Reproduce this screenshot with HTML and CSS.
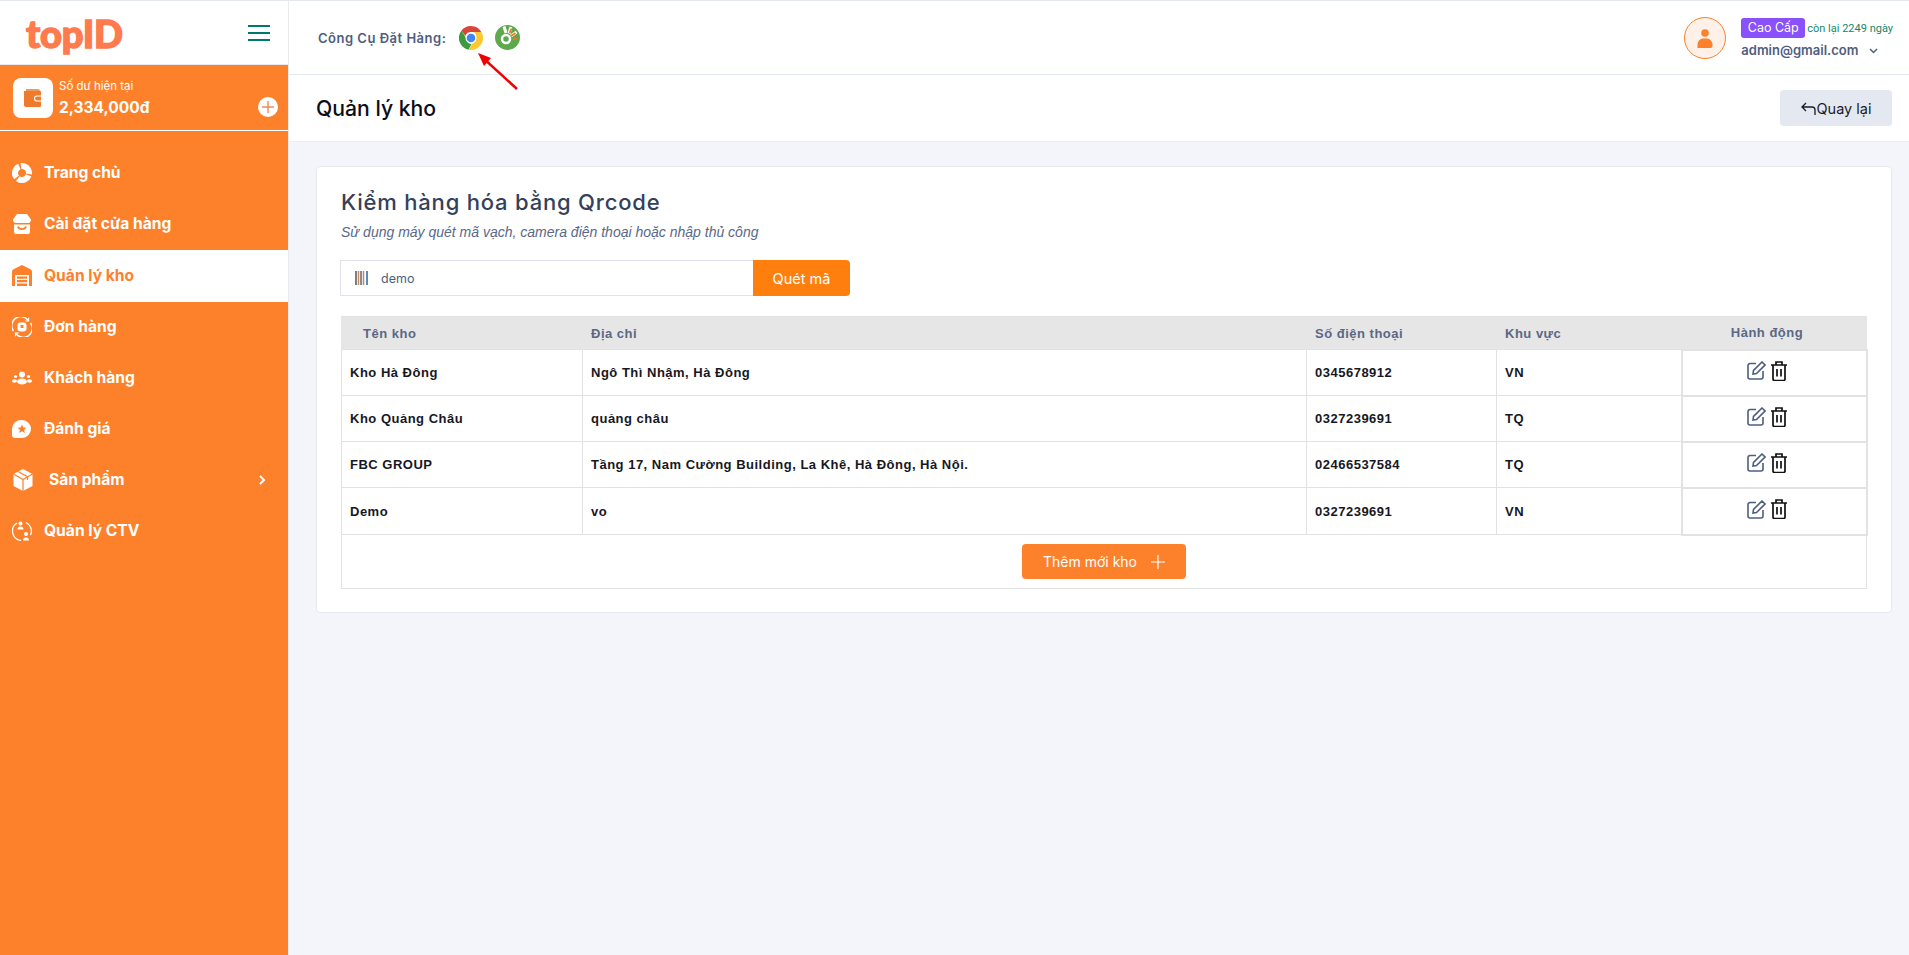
FILE: index.html
```html
<!DOCTYPE html>
<html lang="vi">
<head>
    <meta charset="UTF-8">
    <meta name="viewport" content="width=device-width, initial-scale=1.0">
    <title>Quản lý kho</title>
    <link rel="stylesheet" href="styles.css">
</head>
<body>
    <div class="layout">
        <aside class="sidebar">
            <div class="brand">
                <span class="logo">topID</span>
                <svg class="burger" width="22" height="16" viewBox="0 0 22 16"><path d="M0 1h22M0 8h22M0 15h22" stroke="#00796b" stroke-width="2"/></svg>
            </div>
            <div class="balance">
                <div class="wallet">
                    <svg width="20" height="20" viewBox="0 0 20 20"><path d="M3 1h12a2 2 0 0 1 2 2H3v0z" fill="#f29a5b"/><path d="M1 3h16a1 1 0 0 1 1 1v14a1 1 0 0 1-1 1H3a2 2 0 0 1-2-2z" fill="#ee7a2c"/><path d="M18 8h-4a2 2 0 0 0 0 5h4" fill="none" stroke="#fff" stroke-width="1.2"/></svg>
                </div>
                <div class="balance-text">
                    <div class="balance-label">Số dư hiện tại</div>
                    <div class="balance-value">2,334,000đ</div>
                </div>
                <span class="balance-add">
                    <svg width="12" height="12" viewBox="0 0 12 12"><path d="M6 0v12M0 6h12" stroke="#f5865c" stroke-width="1.4"/></svg>
                </span>
            </div>
            <nav class="menu">
                <a class="menu-item">
                    <svg width="20" height="20" viewBox="0 0 20 20"><circle cx="10" cy="10" r="7" fill="none" stroke="currentColor" stroke-width="6" stroke-dasharray="13 1.660" transform="rotate(20 10 10)"/></svg>
                    <span>Trang chủ</span>
                </a>
                <a class="menu-item">
                    <svg width="20" height="20" viewBox="0 0 20 20"><path d="M5 0h10l4 5.500A3 3 0 0 1 16 9H4a3 3 0 0 1-3-3.500z" fill="currentColor"/><path d="M2 10.500h16V18a2 2 0 0 1-2 2H4a2 2 0 0 1-2-2z" fill="currentColor"/><path d="M6 12.500c1 3.500 7 3.500 8 0" fill="none" stroke="#fd812a" stroke-width="1.800"/></svg>
                    <span>Cài đặt cửa hàng</span>
                </a>
                <a class="menu-item active">
                    <svg width="20" height="21" viewBox="0 0 20 21"><path d="M10 0l8 4a3 3 0 0 1 2 3v14h-3V10H3v11H0V7a3 3 0 0 1 2-3z" fill="currentColor"/><path d="M5 11.500h10v2.300H5zM5 15h10v2.300H5zM5 18.500h10V21H5z" fill="currentColor"/></svg>
                    <span>Quản lý kho</span>
                </a>
                <a class="menu-item">
                    <svg width="20" height="20" viewBox="0 0 20 20"><path d="M1.500 14A9 9 0 0 1 16 3.300M18.500 6A9 9 0 0 1 4 16.700" fill="none" stroke="currentColor" stroke-width="1.400"/><path d="M16.500.8V4h-3.200M3.500 19.200V16h3.200" fill="none" stroke="currentColor" stroke-width="1.200"/><rect x="5.500" y="5.500" width="9" height="9" rx="3" fill="currentColor"/><rect x="8.500" y="8" width="3" height="3" fill="#fd812a"/></svg>
                    <span>Đơn hàng</span>
                </a>
                <a class="menu-item">
                    <svg width="20" height="20" viewBox="0 0 20 20"><circle cx="10" cy="6.500" r="3" fill="currentColor"/><circle cx="3.500" cy="8.500" r="1.600" fill="currentColor"/><circle cx="16.500" cy="8.500" r="1.600" fill="currentColor"/><ellipse cx="10" cy="13.500" rx="5" ry="3" fill="currentColor"/><ellipse cx="2.500" cy="13" rx="2.500" ry="1.800" fill="currentColor"/><ellipse cx="17.500" cy="13" rx="2.500" ry="1.800" fill="currentColor"/></svg>
                    <span>Khách hàng</span>
                </a>
                <a class="menu-item">
                    <svg width="20" height="20" viewBox="0 0 20 20"><path d="M10 1a9 9 0 0 1 0 18H3a3 3 0 0 1-3-3v-6a9 9 0 0 1 10-9z" fill="currentColor"/><path d="M10 5.500l1.300 2.900 3.100.3-2.300 2.100.7 3.100-2.800-1.600-2.800 1.600.7-3.100-2.300-2.100 3.100-.3z" fill="#fd812a"/></svg>
                    <span>Đánh giá</span>
                </a>
                <a class="menu-item has-sub">
                    <svg width="22" height="22" viewBox="0 0 22 22"><path d="M11 0l9.500 5v12L11 22 1.500 17V5z" fill="currentColor"/><path d="M1.500 5L11 10.500 20.500 5M11 10.500V22M6 2.500l9.500 5.200V11" fill="none" stroke="#fd812a" stroke-width="1.200"/></svg>
                    <span>Sản phẩm</span>
                    <svg class="caret" width="8" height="10" viewBox="0 0 8 10"><path d="M2 1l4 4-4 4" fill="none" stroke="#fff" stroke-width="2"/></svg>
                </a>
                <a class="menu-item">
                    <svg width="20" height="20" viewBox="0 0 20 20"><path d="M5 2A9.500 9.500 0 0 0 9 19.500M14 1.500A9.500 9.500 0 0 1 18.500 14" fill="none" stroke="currentColor" stroke-width="1.300"/><circle cx="8.500" cy="2.500" r="2" fill="currentColor"/><path d="M5.500 8.500a3 3 0 0 1 6 0z" fill="currentColor"/><circle cx="14" cy="13" r="2" fill="currentColor"/><path d="M11 19.500a3 3 0 0 1 6 0z" fill="currentColor"/></svg>
                    <span>Quản lý CTV</span>
                </a>
            </nav>
        </aside>

        <div class="main">
            <header class="topbar">
                <div class="tools">
                    <span class="tools-label">Công Cụ Đặt Hàng:</span>
                    <svg class="tool-icon" width="24" height="24" viewBox="0 0 24 24">
                        <path d="M12 0a12 12 0 0 1 10.400 6H12a6 6 0 0 0-5.700 4L2.500 4.500A12 12 0 0 1 12 0z" fill="#db4437"/>
                        <path d="M2.500 4.500L7.300 12.500a5.500 5.500 0 0 0 5.200 5.400L9.500 23.700A12 12 0 0 1 2.500 4.500z" fill="#3e9a3e"/>
                        <path d="M22.400 6A12 12 0 0 1 9.500 23.700L15 15a5.500 5.500 0 0 0 0-9z" fill="#fcc934"/>
                        <circle cx="12" cy="12" r="5.500" fill="#fff"/>
                        <circle cx="12" cy="12" r="4.300" fill="#4285f4"/>
                    </svg>
                    <svg class="tool-icon" width="25" height="25" viewBox="0 0 25 25">
                        <circle cx="12.500" cy="12.500" r="12.500" fill="#5ea84e"/>
                        <path d="M9 1.500L11 8M16 2l-2 6.500M21.500 7L16 11" stroke="#fff" stroke-width="3"/>
                        <circle cx="11" cy="14" r="4" fill="#5ea84e" stroke="#fff" stroke-width="2.500"/>
                        <path d="M16.500 3.500l-2 4.500M20.500 8l-4.500 3M22 13.500l-4 .5" stroke="#f0772b" stroke-width="1.800"/>
                    </svg>
                </div>
                <div class="account">
                    <span class="avatar">
                        <svg width="20" height="20" viewBox="0 0 20 20"><circle cx="10" cy="5" r="3.800" fill="#fd812a"/><path d="M2.500 20v-3.500A6 6 0 0 1 8 10.500h4a6 6 0 0 1 5.500 6V18a2 2 0 0 1-2 2z" fill="#fd812a"/></svg>
                    </span>
                    <div class="account-info">
                        <div class="plan">
                            <span class="plan-badge">Cao Cấp</span>
                            <span class="plan-days">còn lại 2249 ngày</span>
                        </div>
                        <div class="email">
                            admin@gmail.com
                            <svg width="9" height="6" viewBox="0 0 9 6"><path d="M1 1l3.500 3.500L8 1" fill="none" stroke="#4f5d80" stroke-width="1.500"/></svg>
                        </div>
                    </div>
                </div>
            </header>

            <div class="titlebar">
                <h1>Quản lý kho</h1>
                <a class="btn-back">
                    <svg width="15" height="13" viewBox="0 0 15 13"><path d="M5 1L1 5l4 4M1 5h10a3 3 0 0 1 3 3v5" fill="none" stroke="#1c1c28" stroke-width="1.300"/></svg>
                    Quay lại
                </a>
            </div>

            <section class="content">
                <div class="card">
                    <h2>Kiểm hàng hóa bằng Qrcode</h2>
                    <p class="hint">Sử dụng máy quét mã vạch, camera điện thoại hoặc nhập thủ công</p>

                    <div class="scan">
                        <div class="scan-input">
                            <svg width="14" height="14" viewBox="0 0 14 14"><path d="M1 0v14" stroke="#555" stroke-width="1.500"/><path d="M3.500 0v14" stroke="#c98a6a" stroke-width="1.500"/><path d="M6 0v14" stroke="#666" stroke-width="1.500"/><path d="M8.500 0v14" stroke="#b08a80" stroke-width="1.500"/><path d="M12 0v14" stroke="#4a7fa8" stroke-width="1.800"/></svg>
                            <span>demo</span>
                        </div>
                        <button class="btn-scan">Quét mã</button>
                    </div>

                    <table class="stock">
                        <colgroup>
                            <col class="col-name">
                            <col class="col-addr">
                            <col class="col-phone">
                            <col class="col-area">
                            <col class="col-act">
                        </colgroup>
                        <thead>
                            <tr>
                                <th class="th-name">Tên kho</th>
                                <th>Địa chỉ</th>
                                <th>Số điện thoại</th>
                                <th>Khu vực</th>
                                <th class="th-act">Hành động</th>
                            </tr>
                        </thead>
                        <tbody>
                            <tr>
                                <td>Kho Hà Đông</td>
                                <td>Ngô Thì Nhậm, Hà Đông</td>
                                <td>0345678912</td>
                                <td>VN</td>
                                <td class="actions">
                                    <svg width="19" height="19" viewBox="0 0 19 19"><path d="M9 2.500H3a2 2 0 0 0-2 2V16a2 2 0 0 0 2 2h11a2 2 0 0 0 2-2v-6" fill="none" stroke="#4f5d80" stroke-width="1.600"/><path d="M15 1l3 3-8.500 8.500-3.500.5.500-3.500z" fill="none" stroke="#4f5d80" stroke-width="1.600"/></svg>
                                    <svg width="16" height="20" viewBox="0 0 16 20"><path d="M0 4h16M5 4V1h6v3M2 4v14a1.500 1.500 0 0 0 1.500 1.500h9A1.500 1.500 0 0 0 14 18V4M6 8v7.500M10 8v7.500" fill="none" stroke="#111" stroke-width="1.700"/></svg>
                                </td>
                            </tr>
                            <tr>
                                <td>Kho Quảng Châu</td>
                                <td>quảng châu</td>
                                <td>0327239691</td>
                                <td>TQ</td>
                                <td class="actions">
                                    <svg width="19" height="19" viewBox="0 0 19 19"><path d="M9 2.500H3a2 2 0 0 0-2 2V16a2 2 0 0 0 2 2h11a2 2 0 0 0 2-2v-6" fill="none" stroke="#4f5d80" stroke-width="1.600"/><path d="M15 1l3 3-8.500 8.500-3.500.5.500-3.500z" fill="none" stroke="#4f5d80" stroke-width="1.600"/></svg>
                                    <svg width="16" height="20" viewBox="0 0 16 20"><path d="M0 4h16M5 4V1h6v3M2 4v14a1.500 1.500 0 0 0 1.500 1.500h9A1.500 1.500 0 0 0 14 18V4M6 8v7.500M10 8v7.500" fill="none" stroke="#111" stroke-width="1.700"/></svg>
                                </td>
                            </tr>
                            <tr>
                                <td>FBC GROUP</td>
                                <td>Tầng 17, Nam Cường Building, La Khê, Hà Đông, Hà Nội.</td>
                                <td>02466537584</td>
                                <td>TQ</td>
                                <td class="actions">
                                    <svg width="19" height="19" viewBox="0 0 19 19"><path d="M9 2.500H3a2 2 0 0 0-2 2V16a2 2 0 0 0 2 2h11a2 2 0 0 0 2-2v-6" fill="none" stroke="#4f5d80" stroke-width="1.600"/><path d="M15 1l3 3-8.500 8.500-3.500.5.500-3.500z" fill="none" stroke="#4f5d80" stroke-width="1.600"/></svg>
                                    <svg width="16" height="20" viewBox="0 0 16 20"><path d="M0 4h16M5 4V1h6v3M2 4v14a1.500 1.500 0 0 0 1.500 1.500h9A1.500 1.500 0 0 0 14 18V4M6 8v7.500M10 8v7.500" fill="none" stroke="#111" stroke-width="1.700"/></svg>
                                </td>
                            </tr>
                            <tr>
                                <td>Demo</td>
                                <td>vo</td>
                                <td>0327239691</td>
                                <td>VN</td>
                                <td class="actions">
                                    <svg width="19" height="19" viewBox="0 0 19 19"><path d="M9 2.500H3a2 2 0 0 0-2 2V16a2 2 0 0 0 2 2h11a2 2 0 0 0 2-2v-6" fill="none" stroke="#4f5d80" stroke-width="1.600"/><path d="M15 1l3 3-8.500 8.500-3.500.5.500-3.500z" fill="none" stroke="#4f5d80" stroke-width="1.600"/></svg>
                                    <svg width="16" height="20" viewBox="0 0 16 20"><path d="M0 4h16M5 4V1h6v3M2 4v14a1.500 1.500 0 0 0 1.500 1.500h9A1.500 1.500 0 0 0 14 18V4M6 8v7.500M10 8v7.500" fill="none" stroke="#111" stroke-width="1.700"/></svg>
                                </td>
                            </tr>
                            <tr>
                                <td class="add-row" colspan="5">
                                    <button class="btn-add">
                                        Thêm mới kho
                                        <svg width="14" height="14" viewBox="0 0 14 14"><path d="M7 0v14M0 7h14" stroke="#fff" stroke-width="1.200"/></svg>
                                    </button>
                                </td>
                            </tr>
                        </tbody>
                    </table>
                </div>
            </section>
        </div>
    </div>

    <svg class="pointer" width="50" height="50" viewBox="0 0 50 50"><path d="M41 38L6 6" stroke="#f00000" stroke-width="2.500"/><path d="M2 2l13 5-7 8z" fill="#f00000"/></svg>
</body>
</html>
```

FILE: styles.css
```css
* {
    box-sizing: border-box;
}

body {
    margin: 0;
    background: #f3f5fa;
    font-family: Inter, "Noto Sans", sans-serif;
    color: #1c1c28;
}

.layout {
    display: flex;
    min-height: 955px;
    border-top: 1px solid #e3e7f0;
}

/* sidebar */
.sidebar {
    width: 288px;
    flex-shrink: 0;
    background: #fd812a;
}

.brand {
    height: 64px;
    background: #fff;
    border-bottom: 1px solid #e9e9ee;
    display: flex;
    align-items: center;
    justify-content: space-between;
    padding: 0 18px 0 26px;
}

.logo {
    font-family: Lato, Inter, sans-serif;
    font-weight: 900;
    font-size: 38px;
    line-height: 1;
    letter-spacing: -0.2px;
    color: #ff7a4d;
    -webkit-text-stroke: 1.4px #ff7a4d;
}

.balance {
    height: 66px;
    border-bottom: 1px solid #fff;
    display: flex;
    align-items: center;
    padding: 0 10px 0 13px;
    color: #fff;
}

.wallet {
    width: 40px;
    height: 40px;
    background: #fff;
    border-radius: 8px;
    display: flex;
    align-items: center;
    justify-content: center;
}

.balance-text {
    margin-left: 6px;
    padding-top: 4px;
    flex: 1;
}

.balance-label {
    font-size: 11.5px;
    line-height: 14px;
}

.balance-value {
    margin-top: 3px;
    font-size: 15.5px;
    font-weight: 700;
    line-height: 24px;
}

.balance-add {
    width: 20px;
    height: 20px;
    margin-top: 18px;
    background: #fff;
    border-radius: 50%;
    display: flex;
    align-items: center;
    justify-content: center;
}

.menu {
    padding-top: 17px;
}

.menu-item {
    height: 51px;
    display: flex;
    align-items: center;
    gap: 12px;
    padding: 0 22px 2px 12px;
    color: #fff;
    font-size: 15.6px;
    font-weight: 700;
}

.menu-item svg {
    flex-shrink: 0;
}

.menu-item.active {
    height: 52px;
    background: #fff;
    color: #fd812a;
}

.has-sub span {
    flex: 1;
    margin-left: 3px;
}

/* top bar */
.main {
    flex: 1;
    min-width: 0;
    border-left: 1px solid #e9e9ee;
}

.topbar {
    height: 74px;
    background: #fff;
    border-bottom: 1px solid #e4e8f3;
    display: flex;
    align-items: center;
    justify-content: space-between;
    padding: 0 16px 0 29px;
}

.tools {
    display: flex;
    align-items: center;
}

.tools-label {
    font-size: 13px;
    font-weight: 600;
    letter-spacing: 0.5px;
    color: #4f5d80;
    margin-right: 13px;
}

.tool-icon {
    margin-right: 12px;
}

.account {
    display: flex;
    align-items: center;
    gap: 15px;
}

.avatar {
    width: 42px;
    height: 42px;
    background: #fff0e8;
    border: 1px solid #fd812a;
    border-radius: 50%;
    display: flex;
    align-items: center;
    justify-content: center;
}

.plan {
    display: flex;
    align-items: center;
    gap: 2px;
    margin-top: 1px;
}

.plan-badge {
    height: 20px;
    padding: 0 6.5px;
    background: #8950fc;
    border-radius: 3px;
    color: #fff;
    font-size: 12.5px;
    line-height: 20px;
}

.plan-days {
    font-family: Roboto, sans-serif;
    font-size: 11px;
    color: #17876b;
}

.email {
    margin-top: 4px;
    font-size: 13px;
    font-weight: 600;
    line-height: 16px;
    color: #4f5d80;
}

.email svg {
    margin-left: 7px;
    vertical-align: 1px;
}

/* page title */
.titlebar {
    height: 67px;
    background: #fff;
    border-bottom: 1px solid #eceef5;
    display: flex;
    align-items: center;
    justify-content: space-between;
    padding: 0 17px 0 27px;
}

.titlebar h1 {
    margin: 0;
    font-size: 21.2px;
    font-weight: 500;
    color: #0d0d1a;
}

.btn-back {
    width: 112px;
    height: 36px;
    background: #e4e8f1;
    border-radius: 4px;
    display: flex;
    align-items: center;
    justify-content: center;
    gap: 1px;
    font-size: 14.5px;
}

/* card */
.content {
    padding: 24px 17px 0 27px;
}

.card {
    height: 447px;
    padding: 22px 24px 0 24px;
    background: #fff;
    border: 1px solid #e5e8ef;
    border-radius: 4px;
}

.card h2 {
    margin: 0;
    font-size: 22px;
    line-height: 26px;
    font-weight: 500;
    letter-spacing: 0.8px;
    color: #33415c;
}

.hint {
    margin: 8px 0 0;
    font-family: "Liberation Sans", sans-serif;
    font-size: 14px;
    line-height: 18px;
    font-style: italic;
    color: #5a6888;
}

.scan {
    display: flex;
    margin-top: 19px;
    margin-left: -1px;
    height: 36px;
}

.scan-input {
    width: 413px;
    border: 1px solid #e2e2ee;
    border-right: 0;
    display: flex;
    align-items: center;
    gap: 12px;
    padding-left: 14px;
    font-size: 12.5px;
    color: #4f5d80;
}

.btn-scan {
    width: 97px;
    border: 0;
    background: #ff7f0e;
    border-radius: 0 4px 4px 0;
    color: #fff;
    font-family: inherit;
    font-size: 14.5px;
}

/* table */
.stock {
    width: 1525px;
    margin-top: 20px;
    border-collapse: collapse;
    table-layout: fixed;
    font-family: "Liberation Sans", sans-serif;
    font-size: 13px;
    letter-spacing: 0.5px;
}

.col-name { width: 241px; }
.col-addr { width: 724px; }
.col-phone { width: 190px; }
.col-area { width: 185px; }
.col-act { width: 185px; }

.stock th {
    height: 33px;
    padding: 0 0 0 8px;
    background: #e6e6e6;
    border: 1px solid #e2e2e2;
    border-left-color: #e6e6e6;
    border-right-color: #e6e6e6;
    text-align: left;
    font-weight: 700;
    color: #5b6785;
}

.stock th.th-name {
    padding-left: 21px;
}

.stock th.th-act {
    padding: 0 14px 0 0;
    text-align: center;
}

.stock td {
    height: 46px;
    padding: 0 8px;
    border: 1px solid #e2e2e2;
    font-weight: 700;
    color: #17171f;
}

.stock tbody tr:nth-child(4) td {
    height: 47px;
}

.stock td.actions {
    padding: 0 14px 4px 0;
    text-align: center;
    border: 2px solid #e2e2e2;
}

.actions svg {
    vertical-align: middle;
}

.actions svg + svg {
    margin-left: 1px;
}

.stock td.add-row {
    height: 54px;
    padding: 0;
    text-align: center;
}

.btn-add {
    width: 164px;
    height: 35px;
    border: 0;
    background: #fd812a;
    border-radius: 4px;
    color: #fff;
    font-family: Inter, sans-serif;
    font-size: 14px;
    letter-spacing: 0;
}

.btn-add svg {
    margin-left: 10px;
    vertical-align: -2px;
}

/* red arrow drawn over the screenshot */
.pointer {
    position: absolute;
    left: 476px;
    top: 51px;
}
```
